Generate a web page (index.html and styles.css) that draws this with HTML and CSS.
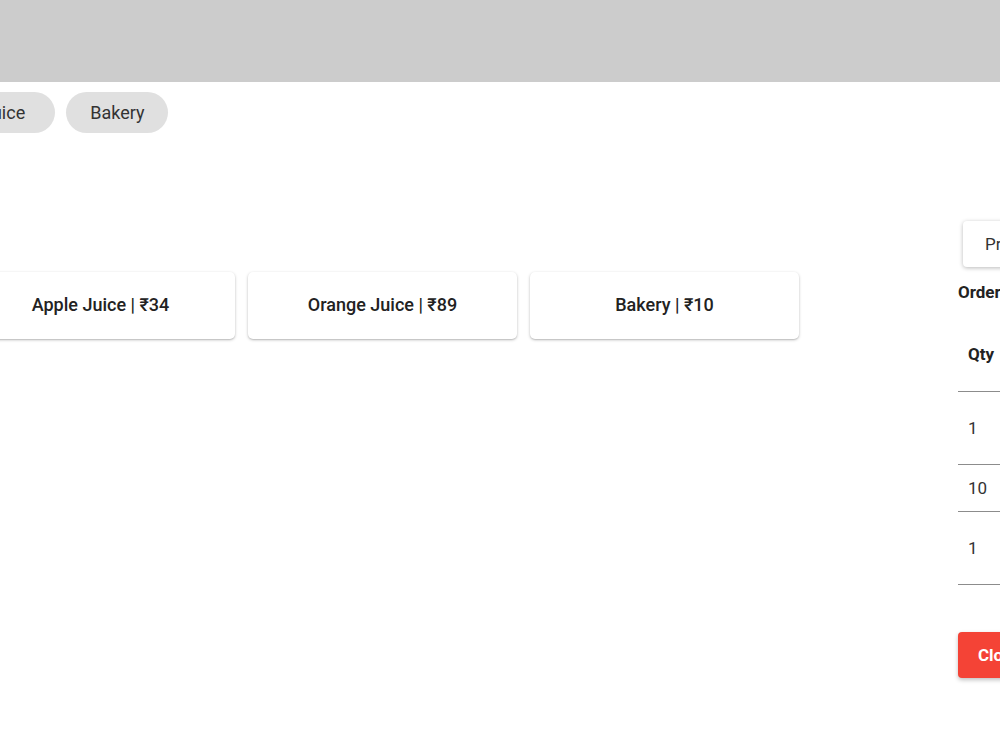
FILE: index.html
```html
<!DOCTYPE html>
<html>
<head>
  <meta charset="UTF-8">
  <title>POS Billing</title>
  <link rel="stylesheet" href="styles.css">
</head>
<body>

<div class="topbar"></div>

<div class="page">
  <div class="chips">
    <button class="chip">Juice</button>
    <button class="chip">Bakery</button>
  </div>

  <div class="main">
    <div class="products">
      <div class="product-card">Apple Juice | ₹34</div>
      <div class="product-card">Orange Juice | ₹89</div>
      <div class="product-card">Bakery | ₹10</div>
    </div>

    <div class="order-panel">
      <button class="print-btn">Print Bill</button>
      <h3 class="order-title">Order Summary</h3>
      <table class="order-table">
        <thead>
          <tr class="row-tall">
            <th>Qty</th>
            <th>Item</th>
            <th>Price</th>
            <th>Action</th>
          </tr>
        </thead>
        <tbody>
          <tr class="row-tall">
            <td>1</td>
            <td>Apple Juice</td>
            <td>₹34</td>
            <td>Remove</td>
          </tr>
          <tr class="row-short">
            <td>10</td>
            <td>Bakery</td>
            <td>₹100</td>
            <td>Remove</td>
          </tr>
          <tr class="row-tall">
            <td>1</td>
            <td>Orange Juice</td>
            <td>₹89</td>
            <td>Remove</td>
          </tr>
        </tbody>
      </table>
      <button class="close-btn">Close Order</button>
    </div>
  </div>
</div>

</body>
</html>
```

FILE: styles.css
```css
body {
  margin: 0;
  font-family: Roboto, "Liberation Sans", sans-serif;
  color: #222;
  overflow: hidden;
  width: 1000px;
  height: 750px;
}
.topbar {
  height: 82px;
  background: #cccccc;
}
.page {
  margin-left: -34px;
  width: 1340px;
}
.chips {
  display: flex;
  gap: 11px;
  margin: 10px 0 0 -8px;
}
.chip {
  height: 41px;
  padding: 0 24px;
  border: none;
  border-radius: 21px;
  background: #e0e0e0;
  font-family: inherit;
  font-size: 18px;
  color: #333;
}
.chip:first-child {
  padding-right: 30px;
}
.main {
  display: flex;
  align-items: flex-start;
}
.products {
  flex: 1;
  display: flex;
  gap: 13px;
  padding-top: 139px;
}
.product-card {
  width: 269px;
  height: 67px;
  display: flex;
  align-items: center;
  justify-content: center;
  padding-bottom: 3px;
  box-sizing: border-box;
  background: #fff;
  border-radius: 5px;
  box-shadow: 0 1px 3px rgba(0, 0, 0, 0.25), 0 1px 1px rgba(0, 0, 0, 0.08);
  font-size: 18px;
  font-weight: 500;
  color: #222;
}
.order-panel {
  width: 348px;
  padding-top: 88px;
}
.print-btn {
  margin-left: 5px;
  height: 46px;
  padding: 0 22px;
  border: none;
  border-radius: 4px;
  background: #fff;
  box-shadow: 0 1px 4px rgba(0, 0, 0, 0.28);
  font-family: inherit;
  font-size: 17px;
  color: #333;
}
.order-title {
  margin: 15px 0 0;
  font-size: 17px;
  line-height: 20px;
  font-weight: 700;
}
.order-table {
  margin-top: 16px;
  width: 100%;
  border-collapse: collapse;
  font-size: 17px;
}
.order-table th,
.order-table td {
  padding: 0 10px;
  text-align: left;
  border-bottom: 1px solid #8c8c8c;
}
.order-table th {
  font-weight: 700;
}
.order-table td {
  color: #333;
}
.row-tall {
  height: 73px;
}
.row-short {
  height: 47px;
}
.close-btn {
  margin-top: 47px;
  height: 46px;
  padding: 0 20px;
  border: none;
  border-radius: 4px;
  background: #f44336;
  box-shadow: 0 2px 4px rgba(0, 0, 0, 0.25);
  color: #fff;
  font-family: inherit;
  font-size: 17px;
  font-weight: 700;
}
```
